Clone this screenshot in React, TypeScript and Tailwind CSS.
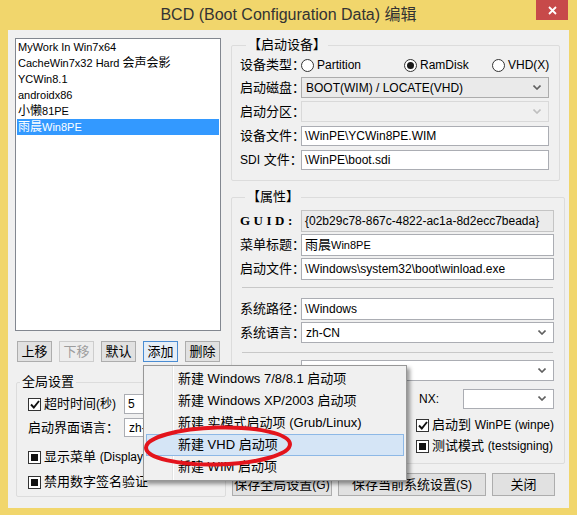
import React from 'react'

const Chevron = ({ disabled = false }: { disabled?: boolean }) => (
  <svg width="8" height="5" viewBox="0 0 8 5" className="shrink-0">
    <polyline
      points="0.5,0.5 4,4 7.5,0.5"
      fill="none"
      stroke={disabled ? '#BFBFBF' : '#606060'}
      strokeWidth="1.6"
    />
  </svg>
)

interface ComboProps {
  value?: string
  className?: string
  tone?: 'gray' | 'white' | 'disabled'
}

const ComboBox: React.FC<ComboProps> = ({ value = '', className = '', tone = 'gray' }) => {
  const skin =
    tone === 'white'
      ? 'bg-white border-[#ABADB3]'
      : tone === 'disabled'
        ? 'bg-[#F0F0F0] border-[#D9D9D9]'
        : 'bg-[#EAEAEA] border-[#ACACAC]'
  return (
    <div className={`flex items-center justify-between border pl-[4px] pr-[7px] text-[12px] ${skin} ${className}`}>
      <span className="truncate">{value}</span>
      <Chevron disabled={tone === 'disabled'} />
    </div>
  )
}

const TextBox = ({ children, gray = false, className = '' }: { children?: React.ReactNode; gray?: boolean; className?: string }) => (
  <div
    className={`flex items-center border pl-[3px] text-[12px] ${gray ? 'bg-[#EBEBEB] border-[#C4C4C4]' : 'bg-white border-[#ABADB3]'} ${className}`}
  >
    {children}
  </div>
)

const Radio = ({ checked = false, label }: { checked?: boolean; label: string }) => (
  <div className="flex items-center gap-[3px]">
    <span className="w-[13px] h-[13px] rounded-full border border-[#333] bg-white flex items-center justify-center">
      {checked && <span className="w-[7px] h-[7px] rounded-full bg-[#1a1a1a]" />}
    </span>
    <span className="text-[12px]">{label}</span>
  </div>
)

const CheckBox = ({ state, children }: { state: 'checked' | 'mixed'; children: React.ReactNode }) => (
  <div className="flex items-center gap-[3px]">
    <span className="w-[13px] h-[13px] border border-[#333] bg-white flex items-center justify-center shrink-0">
      {state === 'checked' ? (
        <svg width="10" height="9" viewBox="0 0 10 9">
          <path d="M1 4.5 L3.8 7.5 L9 1" fill="none" stroke="#111" strokeWidth="1.9" />
        </svg>
      ) : (
        <span className="w-[7px] h-[7px] bg-[#111]" />
      )}
    </span>
    <span className="whitespace-nowrap">{children}</span>
  </div>
)

const Button = ({ children, className = '', tone = 'normal' }: { children: React.ReactNode; className?: string; tone?: 'normal' | 'focus' | 'disabled' }) => {
  const skin =
    tone === 'focus'
      ? 'border-[#4A8CD2] bg-[#E5EEF7] text-black'
      : tone === 'disabled'
        ? 'border-[#CDCDCD] bg-[#EDEDED] text-[#9D9D9D]'
        : 'border-[#ADADAD] bg-[#E1E1E1] text-black'
  return (
    <button className={`border flex items-center justify-center text-[13px] leading-none ${skin} ${className}`}>
      {children}
    </button>
  )
}

const GroupBox = ({
  title,
  className = '',
  legendClass = 'ml-[3px]',
  children,
}: {
  title: React.ReactNode
  className?: string
  legendClass?: string
  children: React.ReactNode
}) => (
  <fieldset className={`border border-[#DCDCDC] rounded-[2px] ${className}`}>
    <legend className={`px-[2px] text-[13px] leading-[14px] ${legendClass}`}>{title}</legend>
    {children}
  </fieldset>
)

const Label = ({ children }: { children?: React.ReactNode }) => (
  <span className="w-[61px] shrink-0 text-[13px] whitespace-nowrap">{children}</span>
)

const bootEntries = [
  { id: 1, name: <>MyWork In Win7x64</> },
  { id: 2, name: <>CacheWin7x32 Hard&nbsp;<span className="text-[12px]">会声会影</span></> },
  { id: 3, name: <>YCWin8.1</> },
  { id: 4, name: <>androidx86</> },
  { id: 5, name: <><span className="text-[12px]">小懒</span>81PE</> },
  { id: 6, name: <><span className="text-[12px]">雨晨</span>Win8PE</> },
]

const menuItems = [
  '新建 Windows 7/8/8.1 启动项',
  '新建 Windows XP/2003 启动项',
  '新建 实模式启动项 (Grub/Linux)',
  '新建 VHD 启动项',
  '新建 WIM 启动项',
]

export default function App() {
  return (
    <div className="relative w-[577px] h-[515px] overflow-hidden bg-[#F1D66C] flex flex-col text-black font-['Liberation_Sans','Noto_Sans_CJK_SC',sans-serif]">
      {/* title bar */}
      <div className="h-[30px] shrink-0 grid grid-cols-[1fr_auto_1fr]">
        <div />
        <div className="flex items-center text-[16px] text-[#333] pb-[1px]">BCD (Boot Configuration Data) 编辑</div>
        <div className="flex justify-end items-start pr-[9px]">
          <div className="w-[32px] h-[20px] bg-[#C74A4A] flex items-center justify-center">
            <svg width="9" height="9" viewBox="0 0 9 9">
              <path d="M1 1 L8 8 M8 1 L1 8" stroke="#fff" strokeWidth="1.8" />
            </svg>
          </div>
        </div>
      </div>

      {/* client area */}
      <div className="mx-[8px] mb-[7px] flex-1 bg-[#F0F0F0] flex pl-[7px] pt-[8px]">
        {/* left column */}
        <div className="w-[206px] flex flex-col">
          <div className="h-[293px] border border-[#828790] bg-white px-[1px] text-[11px]">
            {bootEntries.map(entry => (
              <div
                key={entry.id}
                className={`h-[16px] flex items-center pl-[1px] whitespace-nowrap ${entry.id === 6 ? 'bg-[#3399FF] text-white' : ''}`}
              >
                {entry.name}
              </div>
            ))}
          </div>

          <div className="mt-[10px] pl-[2px] flex gap-[7px]">
            <Button className="w-[35px] h-[21px]">上移</Button>
            <Button className="w-[35px] h-[21px]" tone="disabled">下移</Button>
            <Button className="w-[35px] h-[21px]">默认</Button>
            <Button className="w-[35px] h-[21px]" tone="focus">添加</Button>
            <Button className="w-[35px] h-[21px]">删除</Button>
          </div>

          <GroupBox title="全局设置" legendClass="ml-[-8px]" className="mt-[13px] ml-[1px] h-[122px] px-[11px]">
            <div className="flex flex-col text-[13px]">
              <div className="mt-[5px] h-[20px] flex items-center">
                <div className="w-[96px]">
                  <CheckBox state="checked">超时时间<span className="text-[12px]">(秒)</span></CheckBox>
                </div>
                <TextBox className="w-[90px] h-[20px]">5</TextBox>
              </div>
              <div className="mt-[4px] h-[19px] flex items-center">
                <span className="w-[96px]">启动界面语言：</span>
                <ComboBox value="zh-CN" tone="white" className="w-[90px] h-[19px]" />
              </div>
              <div className="mt-[11px] h-[18px] flex items-center">
                <CheckBox state="mixed">显示菜单 <span className="text-[12px]">(DisplayBootMenu)</span></CheckBox>
              </div>
              <div className="mt-[7px] h-[18px] flex items-center">
                <CheckBox state="mixed">禁用数字签名验证</CheckBox>
              </div>
            </div>
          </GroupBox>
        </div>

        {/* right column */}
        <div className="ml-[10px] w-[328px] flex flex-col">
          <GroupBox title="【启动设备】" legendClass="ml-[6px]" className="pl-[8px] pr-[10px] pb-[10px]">
            <div className="pt-[4px] flex flex-col gap-[3px]">
              <div className="h-[18px] flex items-center">
                <Label>设备类型：</Label>
                <div className="w-[103px]"><Radio label="Partition" /></div>
                <div className="w-[88px]"><Radio label="RamDisk" checked /></div>
                <Radio label="VHD(X)" />
              </div>
              <div className="h-[21px] flex items-center">
                <Label>启动磁盘：</Label>
                <ComboBox value="BOOT(WIM) / LOCATE(VHD)" className="flex-1 h-[21px]" />
              </div>
              <div className="h-[21px] flex items-center">
                <Label>启动分区：</Label>
                <ComboBox tone="disabled" className="flex-1 h-[21px]" />
              </div>
              <div className="h-[21px] flex items-center">
                <Label>设备文件：</Label>
                <TextBox className="flex-1 h-[20px]">\WinPE\YCWin8PE.WIM</TextBox>
              </div>
              <div className="h-[21px] flex items-center">
                <Label><span className="text-[12px]">SDI</span> 文件：</Label>
                <TextBox className="flex-1 h-[20px]">\WinPE\boot.sdi</TextBox>
              </div>
            </div>
          </GroupBox>

          <GroupBox title="【属性】" legendClass="ml-[5px]" className="mt-[9px] pl-[8px] pr-[10px] pb-[8px]">
            <div className="pt-[6px] flex flex-col">
              <div className="h-[22px] flex items-center">
                <Label>
                  <span className="font-['Liberation_Serif',serif] font-bold text-[13px] tracking-[3.5px]">GUID:</span>
                </Label>
                <TextBox gray className="flex-1 h-[22px]">{'{02b29c78-867c-4822-ac1a-8d2ecc7beada}'}</TextBox>
              </div>
              <div className="mt-[2px] h-[22px] flex items-center">
                <Label>菜单标题：</Label>
                <TextBox className="flex-1 h-[22px]"><span className="text-[13px]">雨晨</span><span className="text-[11px]">Win8PE</span></TextBox>
              </div>
              <div className="mt-[2px] h-[22px] flex items-center">
                <Label>启动文件：</Label>
                <TextBox className="flex-1 h-[22px]">\Windows\system32\boot\winload.exe</TextBox>
              </div>
              <div className="mt-[7px] ml-[2px] mr-[1px] border-t border-[#C8C8C8] h-0" />
              <div className="mt-[10px] h-[22px] flex items-center">
                <Label>系统路径：</Label>
                <TextBox className="flex-1 h-[22px]">\Windows</TextBox>
              </div>
              <div className="mt-[2px] h-[21px] flex items-center">
                <Label>系统语言：</Label>
                <ComboBox value="zh-CN" tone="white" className="flex-1 h-[21px]" />
              </div>
              <div className="mt-[9px] ml-[2px] mr-[1px] border-t border-[#C8C8C8] h-0" />
              <div className="mt-[7px] h-[21px] flex items-center">
                <Label />
                <ComboBox tone="white" className="flex-1 h-[21px]" />
              </div>
              <div className="mt-[7px] h-[21px] flex items-center justify-end">
                <span className="text-[12px] w-[44px]">NX:</span>
                <ComboBox tone="white" className="w-[91px] h-[20px]" />
              </div>
              <div className="mt-[7px] h-[18px] flex items-center pl-[176px] text-[13px]">
                <CheckBox state="checked">启动到 <span className="text-[12px]">WinPE (winpe)</span></CheckBox>
              </div>
              <div className="mt-[3px] h-[18px] flex items-center pl-[176px] text-[13px]">
                <CheckBox state="mixed">测试模式 <span className="text-[12px]">(testsigning)</span></CheckBox>
              </div>
            </div>
          </GroupBox>

          <div className="mt-[9px] ml-[1px] flex gap-[6px]">
            <Button className="w-[100px] h-[23px]">保存全局设置<span className="text-[12px]">(G)</span></Button>
            <Button className="w-[148px] h-[23px]">保存当前系统设置<span className="text-[12px]">(S)</span></Button>
            <Button className="w-[63px] h-[23px]">关闭</Button>
          </div>
        </div>
      </div>

      {/* context menu of 添加 */}
      <div className="absolute left-[143px] top-[365px] w-[264px] border border-[#979797] py-[2px] px-[2px] shadow-[3px_3px_4px_rgba(0,0,0,0.4)] bg-[linear-gradient(to_right,#F0F0F0_28px,#E2E3E3_28px,#E2E3E3_29px,#FFFFFF_29px,#FFFFFF_30px,#F0F0F0_30px)]">
        {menuItems.map((item, i) => (
          <div
            key={item}
            className={`h-[22px] flex items-center pl-[31px] text-[13px] whitespace-nowrap border ${i === 3 ? 'bg-[#D5E5F6] border-[#8DB8E6]' : 'border-transparent'}`}
          >
            {item}
          </div>
        ))}
      </div>

      {/* red annotation ellipse */}
      <svg className="absolute left-[140px] top-[422px] pointer-events-none" width="160" height="52" viewBox="0 0 160 52">
        <ellipse cx="78" cy="24" rx="72" ry="18.5" fill="none" stroke="#E3141C" strokeWidth="4" transform="rotate(-1.5 78 24)" />
      </svg>
    </div>
  )
}
